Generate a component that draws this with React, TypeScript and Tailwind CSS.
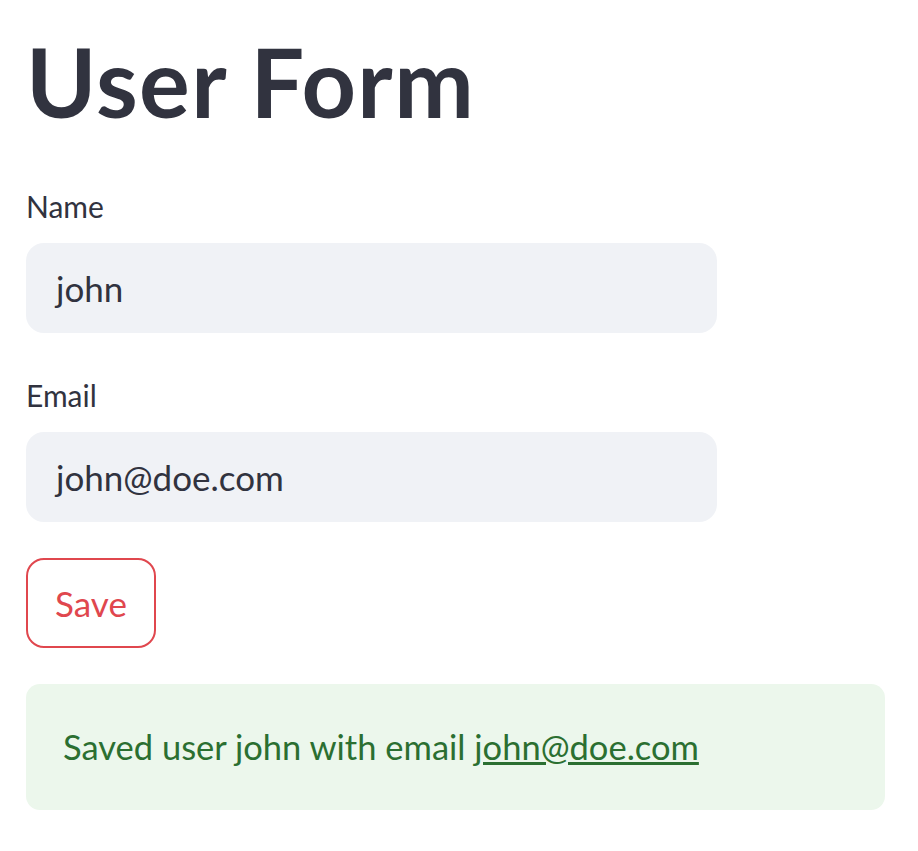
import React from "react";

type FieldProps = {
  label: string;
  value: string;
};

function Field({ label, value }: FieldProps) {
  return (
    <div className="flex flex-col">
      <label className="h-[36px] text-[30px] leading-[36px] text-[#31333f]">
        {label}
      </label>
      <div className="mt-[19px] flex h-[90px] w-[691px] items-center rounded-[18px] bg-[#f0f2f6] px-[30px] text-[35px] text-[#31333f]">
        {value}
      </div>
    </div>
  );
}

export default function App() {
  const name = "john";
  const email = "john@doe.com";

  return (
    <div className="min-h-screen bg-white font-['Lato',sans-serif]">
      <div className="flex flex-col px-[26px] pt-[21px]">
        <h1 className="text-[95px] font-bold leading-[120px] tracking-[1.4px] text-[#31333f]">
          User Form
        </h1>
        <div className="mt-[47px] flex flex-col gap-[44px]">
          <Field label="Name" value={name} />
          <Field label="Email" value={email} />
        </div>
        <div className="mt-[36px]">
          <button className="flex h-[90px] w-[130px] items-center justify-center rounded-[18px] border-2 border-[#e0474e] bg-white text-[35px] text-[#e0474e]">
            Save
          </button>
        </div>
        <div className="mt-[36px] flex h-[126px] w-[859px] items-center rounded-[14px] bg-[#ecf7ec] px-[37px] text-[34.5px] text-[#2b6f31]">
          <span>
            Saved user {name} with email{" "}
            <a href="#" className="underline">
              {email}
            </a>
          </span>
        </div>
      </div>
    </div>
  );
}
